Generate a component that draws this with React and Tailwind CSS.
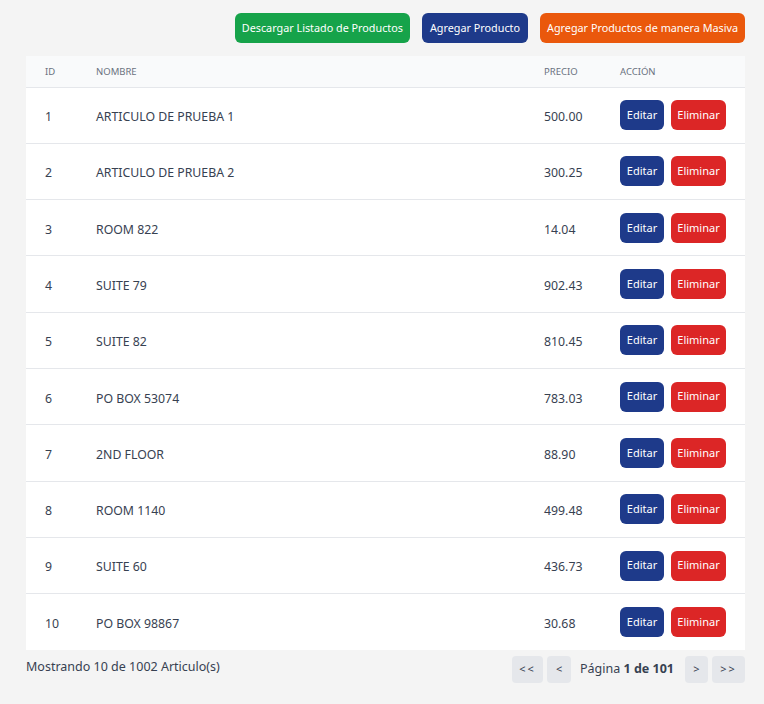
import React from 'react';

const productos = [
    { id: 1, nombre: 'ARTICULO DE PRUEBA 1', precio: '500.00' },
    { id: 2, nombre: 'ARTICULO DE PRUEBA 2', precio: '300.25' },
    { id: 3, nombre: 'ROOM 822', precio: '14.04' },
    { id: 4, nombre: 'SUITE 79', precio: '902.43' },
    { id: 5, nombre: 'SUITE 82', precio: '810.45' },
    { id: 6, nombre: 'PO BOX 53074', precio: '783.03' },
    { id: 7, nombre: '2ND FLOOR', precio: '88.90' },
    { id: 8, nombre: 'ROOM 1140', precio: '499.48' },
    { id: 9, nombre: 'SUITE 60', precio: '436.73' },
    { id: 10, nombre: 'PO BOX 98867', precio: '30.68' }
];

const App = () => {
    return (
        <div className="min-h-[704px] bg-[#f4f4f4] pb-4 pl-[26px] pr-[19px] pt-[13px] font-['Noto_Sans',sans-serif] text-[#374151]">
            {/* Acciones superiores */}
            <div className="mb-[13px] flex justify-end gap-3">
                <button
                    type="button"
                    className="h-[30px] rounded-md bg-[#16a34a] px-[7px] text-[10.8px] text-white">
                    Descargar Listado de Productos
                </button>
                <button
                    type="button"
                    className="h-[30px] rounded-md bg-[#1e3a8a] px-2 text-[10.8px] text-white">
                    Agregar Producto
                </button>
                <button
                    type="button"
                    className="h-[30px] rounded-md bg-[#ea580c] px-[7px] text-[10.8px] text-white">
                    Agregar Productos de manera Masiva
                </button>
            </div>

            <table className="w-full table-fixed border-collapse bg-white text-left text-[12.3px]">
                <colgroup>
                    <col className="w-[51px]" />
                    <col className="w-[448px]" />
                    <col className="w-[76px]" />
                    <col className="w-[144px]" />
                </colgroup>
                <thead className="bg-[#f9fafb] text-[9.5px] uppercase text-[#6b7280]">
                    <tr className="border-b border-[#e5e7eb]">
                        <th scope="col" className="h-[31px] pl-[19px] pt-[2px] font-normal">
                            ID
                        </th>
                        <th scope="col" className="pl-[19px] pt-[2px] font-normal">
                            Nombre
                        </th>
                        <th scope="col" className="pl-[19px] pt-[2px] font-normal">
                            Precio
                        </th>
                        <th scope="col" className="pl-[19px] pt-[2px] font-normal">
                            Acción
                        </th>
                    </tr>
                </thead>
                <tbody>
                    {productos.map((producto, idx) => (
                        <tr
                            key={producto.id}
                            className={idx < productos.length - 1 ? 'border-b border-[#e5e7eb]' : ''}>
                            <td className="pb-[10.67px] pl-[19px] pt-[14.67px]">{producto.id}</td>
                            <td className="pb-[10.67px] pl-[19px] pt-[14.67px]">{producto.nombre}</td>
                            <td className="pb-[10.67px] pl-[19px] pt-[14.67px]">{producto.precio}</td>
                            <td className="py-[12.67px] pl-[19px]">
                                <div className="flex gap-[7px]">
                                    <button
                                        type="button"
                                        className="h-[30px] w-[44px] rounded-md bg-[#1e3a8a] text-[11px] text-white">
                                        Editar
                                    </button>
                                    <button
                                        type="button"
                                        className="h-[30px] w-[55px] rounded-md bg-[#dc2626] text-[11px] text-white">
                                        Eliminar
                                    </button>
                                </div>
                            </td>
                        </tr>
                    ))}
                </tbody>
            </table>

            {/* Paginación */}
            <div className="mt-[6px] flex items-start justify-between">
                <span className="pt-[2px] text-[12.5px]">Mostrando 10 de 1002 Articulo(s)</span>
                <div className="flex items-center gap-[4px] text-[11px]">
                    <button type="button" className="ml-[2px] h-[27px] w-[31px] rounded-sm bg-[#e5e7eb] tracking-[2px]">
                        &lt;&lt;
                    </button>
                    <button type="button" className="h-[27px] w-[24px] rounded-sm bg-[#e5e7eb]">
                        &lt;
                    </button>
                    <span className="px-[5px] text-[12.5px]">
                        Página <strong>1 de 101</strong>
                    </span>
                    <button type="button" className="ml-[2px] h-[27px] w-[23px] rounded-sm bg-[#e5e7eb]">
                        &gt;
                    </button>
                    <button type="button" className="h-[27px] w-[33px] rounded-sm bg-[#e5e7eb] tracking-[2px]">
                        &gt;&gt;
                    </button>
                </div>
            </div>
        </div>
    );
};

export default App;
